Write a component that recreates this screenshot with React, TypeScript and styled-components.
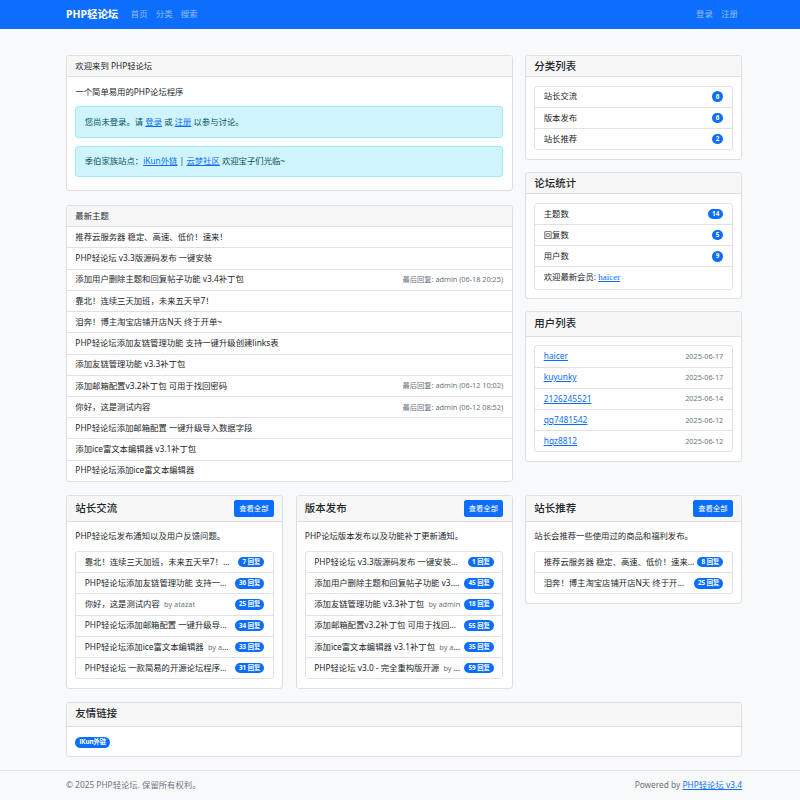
import * as React from 'react';
import styled, { createGlobalStyle } from 'styled-components';

// the page is a bootstrap layout shown at about half size, so 1rem is ~8.36px
const REM = 8.36;
const rem = (n: number) => `${(n * REM).toFixed(2)}px`;

const colors = {
  primary: '#0d6efd',
  text: '#212529',
  muted: '#6c757d',
  border: '#dee2e6',
  cardBorder: '#dcdee1',
  headerBg: '#f7f7f7',
  page: '#f8f9fa',
  infoBg: '#cff4fc',
  infoBorder: '#9eeaf9',
  infoText: '#055160',
};

const GlobalStyle = createGlobalStyle`
  html, body {
    margin: 0;
    padding: 0;
  }
  body {
    background: ${colors.page};
    font-family: "Noto Sans", "Noto Sans CJK SC", sans-serif;
    font-size: ${rem(1)};
    line-height: 1.5;
    color: ${colors.text};
  }
  * {
    box-sizing: border-box;
  }
`;

// Layout
const Container = styled.div`
  width: 676px;
  margin-left: 66px;
`;

const Navbar = styled.nav`
  background: ${colors.primary};
  padding: ${rem(0.5)} 0;
`;

const NavInner = styled(Container)`
  display: flex;
  align-items: center;
`;

const Brand = styled.a`
  color: #fff;
  font-weight: 700;
  font-size: ${rem(1.25)};
  line-height: 1.5;
  padding: ${rem(0.3125)} 0;
  margin-right: ${rem(1)};
  text-decoration: none;
`;

const NavGroup = styled.div<{ $end?: boolean }>`
  display: flex;
  margin-left: ${(p) => (p.$end ? 'auto' : '0')};
`;

const NavLink = styled.a`
  color: rgba(255, 255, 255, 0.55);
  padding: 0 ${rem(0.5)};
  text-decoration: none;
`;

const Main = styled(Container)`
  margin-top: 25.7px;
`;

const TopRow = styled.div`
  display: grid;
  grid-template-columns: 446.5px 1fr;
  gap: 12.5px;
  align-items: start;
`;

const Column = styled.div<{ $gap: number }>`
  display: flex;
  flex-direction: column;
  gap: ${(p) => p.$gap}px;
`;

const BottomRow = styled.div`
  display: grid;
  grid-template-columns: repeat(3, 1fr);
  gap: 12.5px;
  align-items: start;
  margin-top: 13.5px;
`;

// Cards
const Card = styled.div<{ $spaced?: boolean }>`
  background: #fff;
  border: 1px solid ${colors.cardBorder};
  border-radius: ${rem(0.375)};
  overflow: hidden;
  margin-top: ${(p) => (p.$spaced ? '13px' : '0')};
`;

const CardHeader = styled.div`
  display: flex;
  align-items: center;
  justify-content: space-between;
  background: ${colors.headerBg};
  border-bottom: 1px solid ${colors.cardBorder};
  padding: 3.9px ${rem(1)};
`;

const CardTitle = styled.h5<{ $loose?: boolean }>`
  margin: 0;
  font-size: ${rem(1.25)};
  font-weight: 500;
  line-height: ${(p) => (p.$loose ? 1.5 : 1.2)};
`;

const CardBody = styled.div<{ $tight?: boolean }>`
  padding: ${rem(1)};
  padding-bottom: ${(p) => (p.$tight ? rem(0.5) : rem(1))};
`;

const Text = styled.p`
  margin: 0 0 ${rem(1)};
`;

const Alert = styled.div`
  background: ${colors.infoBg};
  border: 1px solid ${colors.infoBorder};
  color: ${colors.infoText};
  border-radius: ${rem(0.375)};
  padding: ${rem(1)};
  margin-bottom: ${rem(1)};
`;

const Link = styled.a<{ $serif?: boolean }>`
  color: ${colors.primary};
  text-decoration: underline;
  ${(p) => p.$serif && `font-family: "Liberation Serif", serif; font-size: 9px;`}
`;

const SmallButton = styled.a`
  background: ${colors.primary};
  color: #fff;
  border: 1px solid ${colors.primary};
  border-radius: ${rem(0.25)};
  font-size: ${rem(0.875)};
  line-height: 1.5;
  padding: 1.8px ${rem(0.5)};
  text-decoration: none;
`;

// Lists
const ListGroup = styled.div<{ $flush?: boolean }>`
  border: ${(p) => (p.$flush ? 'none' : `1px solid ${colors.border}`)};
  border-radius: ${(p) => (p.$flush ? '0' : rem(0.375))};
`;

const ListItem = styled.div`
  display: flex;
  align-items: center;
  justify-content: space-between;
  gap: 2px;
  padding: 3.85px ${rem(1)};
  border-bottom: 1px solid ${colors.border};
  &:last-child {
    border-bottom: none;
  }
`;

const Badge = styled.span`
  display: inline-block;
  flex-shrink: 0;
  background: ${colors.primary};
  color: #fff;
  border-radius: 50rem;
  font-size: ${rem(0.75)};
  font-weight: 700;
  line-height: 1;
  padding: 0.35em 0.65em;
  white-space: nowrap;
`;

const Muted = styled.span<{ $gap?: boolean }>`
  color: ${colors.muted};
  font-size: 0.875em;
  margin-left: ${(p) => (p.$gap ? '4.3px' : '0')};
`;

const TopicTitle = styled.span`
  flex: 1;
  min-width: 0;
  overflow: hidden;
  white-space: nowrap;
  text-overflow: ellipsis;
`;

const Footer = styled.footer`
  margin-top: 12.5px;
  border-top: 1px solid ${colors.border};
  padding: ${rem(1)} 0 7px;
  color: ${colors.muted};
`;

const FooterInner = styled(Container)`
  display: flex;
  justify-content: space-between;
`;

// Data
const latest = [
  { title: '推荐云服务器 稳定、高速、低价！速来！' },
  { title: 'PHP轻论坛 v3.3版源码发布 一键安装' },
  { title: '添加用户删除主题和回复帖子功能 v3.4补丁包', reply: '最后回复: admin (06-18 20:25)' },
  { title: '靠北！连续三天加班，未来五天早7！' },
  { title: '泪奔！博主淘宝店铺开店N天 终于开单~' },
  { title: 'PHP轻论坛添加友链管理功能 支持一键升级创建links表' },
  { title: '添加友链管理功能 v3.3补丁包' },
  { title: '添加邮箱配置v3.2补丁包 可用于找回密码', reply: '最后回复: admin (06-12 10:02)' },
  { title: '你好，这是测试内容', reply: '最后回复: admin (06-12 08:52)' },
  { title: 'PHP轻论坛添加邮箱配置 一键升级导入数据字段' },
  { title: '添加ice富文本编辑器 v3.1补丁包' },
  { title: 'PHP轻论坛添加ice富文本编辑器' },
];

const categories = [
  { name: '站长交流', count: 6 },
  { name: '版本发布', count: 6 },
  { name: '站长推荐', count: 2 },
];

const stats = [
  { name: '主题数', count: 14 },
  { name: '回复数', count: 5 },
  { name: '用户数', count: 9 },
];

const users = [
  { name: 'haicer', date: '2025-06-17' },
  { name: 'kuyunky', date: '2025-06-17' },
  { name: '2126245521', date: '2025-06-14' },
  { name: 'qq7481542', date: '2025-06-12' },
  { name: 'hqz8812', date: '2025-06-12' },
];

type Topic = { title: string; by: string; replies: number };

const sections: { name: string; desc: string; topics: Topic[] }[] = [
  {
    name: '站长交流',
    desc: 'PHP轻论坛发布通知以及用户反馈问题。',
    topics: [
      { title: '靠北！连续三天加班，未来五天早7！', by: 'admin', replies: 7 },
      { title: 'PHP轻论坛添加友链管理功能 支持一键升级创建links表', by: 'admin', replies: 36 },
      { title: '你好，这是测试内容', by: 'atazat', replies: 25 },
      { title: 'PHP轻论坛添加邮箱配置 一键升级导入数据字段', by: 'admin', replies: 34 },
      { title: 'PHP轻论坛添加ice富文本编辑器', by: 'admin', replies: 33 },
      { title: 'PHP轻论坛 一款简易的开源论坛程序发布', by: 'admin', replies: 31 },
    ],
  },
  {
    name: '版本发布',
    desc: 'PHP论坛版本发布以及功能补丁更新通知。',
    topics: [
      { title: 'PHP轻论坛 v3.3版源码发布 一键安装', by: 'admin', replies: 1 },
      { title: '添加用户删除主题和回复帖子功能 v3.4补丁包', by: 'admin', replies: 45 },
      { title: '添加友链管理功能 v3.3补丁包', by: 'admin', replies: 18 },
      { title: '添加邮箱配置v3.2补丁包 可用于找回密码', by: 'admin', replies: 55 },
      { title: '添加ice富文本编辑器 v3.1补丁包', by: 'admin', replies: 35 },
      { title: 'PHP轻论坛 v3.0 - 完全重构版开源', by: 'admin', replies: 59 },
    ],
  },
  {
    name: '站长推荐',
    desc: '站长会推荐一些使用过的商品和福利发布。',
    topics: [
      { title: '推荐云服务器 稳定、高速、低价！速来！', by: 'admin', replies: 8 },
      { title: '泪奔！博主淘宝店铺开店N天 终于开单~', by: 'admin', replies: 25 },
    ],
  },
];

export default function App() {
  return (
    <>
      <GlobalStyle />
      <Navbar>
        <NavInner>
          <Brand href="#">PHP轻论坛</Brand>
          <NavGroup>
            <NavLink href="#">首页</NavLink>
            <NavLink href="#">分类</NavLink>
            <NavLink href="#">搜索</NavLink>
          </NavGroup>
          <NavGroup $end>
            <NavLink href="#">登录</NavLink>
            <NavLink href="#">注册</NavLink>
          </NavGroup>
        </NavInner>
      </Navbar>

      <Main>
        <TopRow>
          <Column $gap={14}>
            <Card>
              <CardHeader>欢迎来到 PHP轻论坛</CardHeader>
              <CardBody $tight>
                <Text>一个简单易用的PHP论坛程序</Text>
                <Alert>
                  您尚未登录。请 <Link href="#">登录</Link> 或 <Link href="#">注册</Link> 以参与讨论。
                </Alert>
                <Alert>
                  季伯家族站点：<Link href="#">iKun外链</Link> | <Link href="#">云梦社区</Link> 欢迎宝子们光临~
                </Alert>
              </CardBody>
            </Card>

            <Card>
              <CardHeader>最新主题</CardHeader>
              <ListGroup $flush>
                {latest.map((t) => (
                  <ListItem key={t.title}>
                    <span>{t.title}</span>
                    {t.reply && <Muted>{t.reply}</Muted>}
                  </ListItem>
                ))}
              </ListGroup>
            </Card>
          </Column>

          <Column $gap={12.5}>
            <Card>
              <CardHeader>
                <CardTitle>分类列表</CardTitle>
              </CardHeader>
              <CardBody>
                <ListGroup>
                  {categories.map((c) => (
                    <ListItem key={c.name}>
                      <span>{c.name}</span>
                      <Badge>{c.count}</Badge>
                    </ListItem>
                  ))}
                </ListGroup>
              </CardBody>
            </Card>

            <Card>
              <CardHeader>
                <CardTitle>论坛统计</CardTitle>
              </CardHeader>
              <CardBody>
                <ListGroup>
                  {stats.map((s) => (
                    <ListItem key={s.name}>
                      <span>{s.name}</span>
                      <Badge>{s.count}</Badge>
                    </ListItem>
                  ))}
                  <ListItem>
                    <span>
                      欢迎最新会员: <Link href="#" $serif>haicer</Link>
                    </span>
                  </ListItem>
                </ListGroup>
              </CardBody>
            </Card>

            <Card>
              <CardHeader>
                <CardTitle $loose>用户列表</CardTitle>
              </CardHeader>
              <CardBody>
                <ListGroup>
                  {users.map((u) => (
                    <ListItem key={u.name}>
                      <Link href="#">{u.name}</Link>
                      <Muted>{u.date}</Muted>
                    </ListItem>
                  ))}
                </ListGroup>
              </CardBody>
            </Card>
          </Column>
        </TopRow>

        <BottomRow>
          {sections.map((s) => (
            <Card key={s.name}>
              <CardHeader>
                <CardTitle>{s.name}</CardTitle>
                <SmallButton href="#">查看全部</SmallButton>
              </CardHeader>
              <CardBody>
                <Text>{s.desc}</Text>
                <ListGroup>
                  {s.topics.map((t) => (
                    <ListItem key={t.title}>
                      <TopicTitle>
                        {t.title}
                        <Muted $gap>by {t.by}</Muted>
                      </TopicTitle>
                      <Badge>{t.replies} 回复</Badge>
                    </ListItem>
                  ))}
                </ListGroup>
              </CardBody>
            </Card>
          ))}
        </BottomRow>

        <Card $spaced>
          <CardHeader>
            <CardTitle $loose>友情链接</CardTitle>
          </CardHeader>
          <CardBody>
            <Badge>iKun外链</Badge>
          </CardBody>
        </Card>
      </Main>

      <Footer>
        <FooterInner>
          <span>© 2025 PHP轻论坛. 保留所有权利。</span>
          <span>
            Powered by <Link href="#">PHP轻论坛 v3.4</Link>
          </span>
        </FooterInner>
      </Footer>
    </>
  );
}
